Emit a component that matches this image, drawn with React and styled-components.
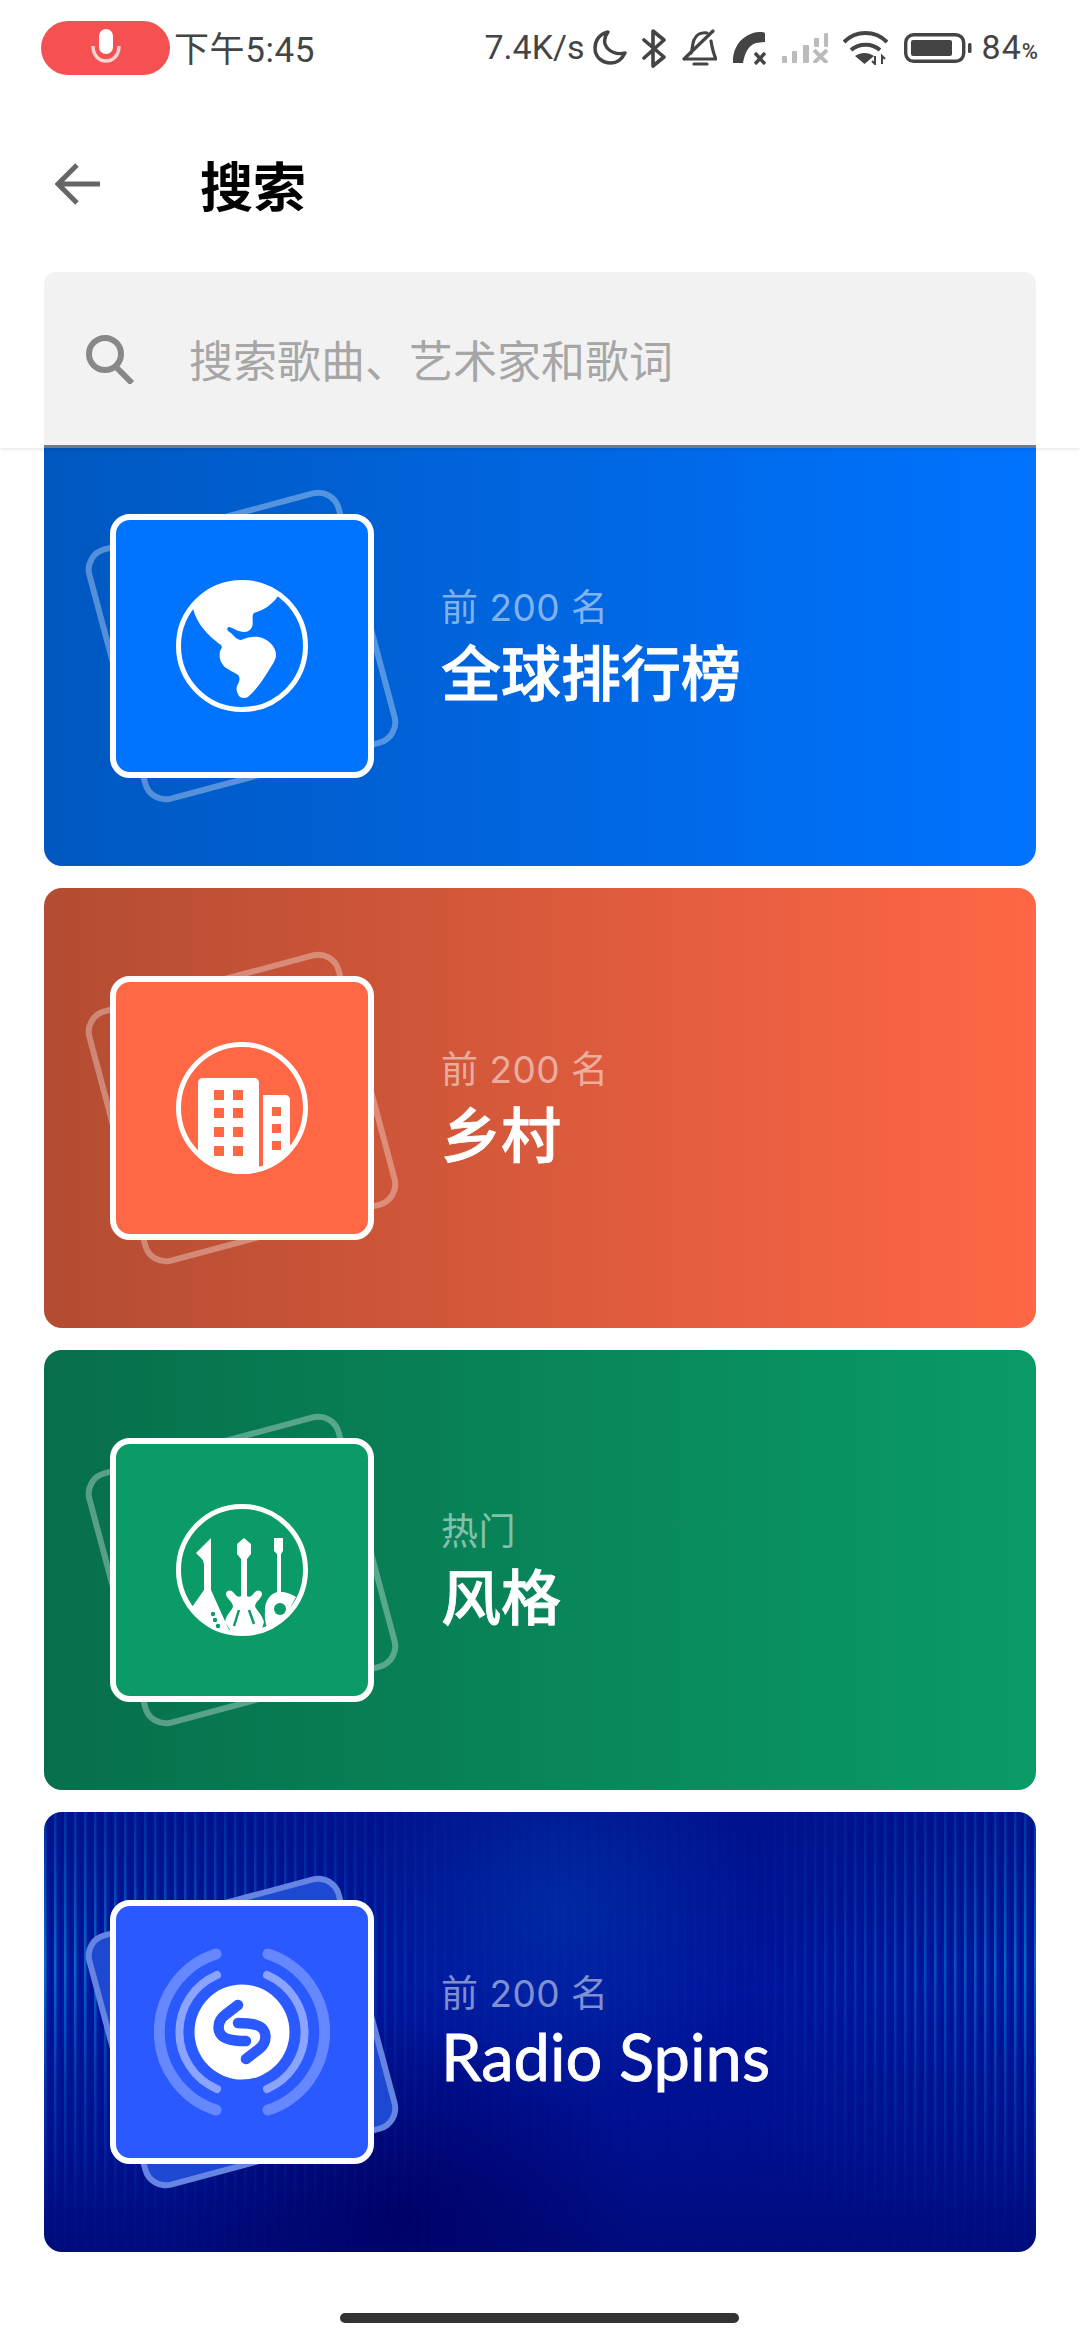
import React from 'react'
import styled, { createGlobalStyle } from 'styled-components'

const GlobalStyle = createGlobalStyle`
  html, body { margin: 0; padding: 0; background: #fff; }
  body { font-family: "Noto Sans CJK SC", "Noto Sans", sans-serif; }
`

function App() {
  return (
    <Page>
      <GlobalStyle />
      <Header>
        <StatusBar>
          <MicPill>
            <svg width="30" height="38" viewBox="0 0 30 38">
              <rect x="8" y="0" width="14" height="25" rx="7" fill="#fff" />
              <path d="M2 17 C2 37 28 37 28 17" fill="none" stroke="#fff" strokeOpacity=".75" strokeWidth="3.4" />
            </svg>
          </MicPill>
          <Time>下午5:45</Time>
          <Spacer />
          <Speed>7.4K/s</Speed>
          <StatusIcons />
          <Percent>84<small>%</small></Percent>
        </StatusBar>
        <TitleRow>
          <BackButton>
            <svg width="46" height="44" viewBox="0 0 46 44" fill="none" stroke="#666" strokeWidth="5">
              <path d="M45 22H4M22 3 3 22l19 19" />
            </svg>
          </BackButton>
          <Title>搜索</Title>
        </TitleRow>
        <SearchBox>
          <svg width="50" height="50" viewBox="0 0 50 50" fill="none" stroke="#888" strokeWidth="6">
            <circle cx="20" cy="20" r="16" />
            <path d="M30 32 47 49" />
          </svg>
          <Placeholder>搜索歌曲、艺术家和歌词</Placeholder>
        </SearchBox>
      </Header>
      <ChartList>
        <ChartCard $from="#0058c0" $to="#0073ff">
          <Cover>
            <BackPlate />
            <FrontPlate $fill="#0073ff">
              <GlobeIcon />
            </FrontPlate>
          </Cover>
          <CardText>
            <Eyebrow>前 200 名</Eyebrow>
            <CardTitle>全球排行榜</CardTitle>
          </CardText>
        </ChartCard>
        <ChartCard $from="#b34c32" $to="#ff6745">
          <Cover>
            <BackPlate />
            <FrontPlate $fill="#ff6745">
              <CityIcon />
            </FrontPlate>
          </Cover>
          <CardText>
            <Eyebrow>前 200 名</Eyebrow>
            <CardTitle>乡村</CardTitle>
          </CardText>
        </ChartCard>
        <ChartCard $from="#076f4b" $to="#0a9b67">
          <Cover>
            <BackPlate />
            <FrontPlate $fill="#0b9b67">
              <GuitarIcon />
            </FrontPlate>
          </Cover>
          <CardText>
            <Eyebrow>热门</Eyebrow>
            <CardTitle>风格</CardTitle>
          </CardText>
        </ChartCard>
        <RadioCard>
          <Cover>
            <BackPlate $fill="#1c48d2" />
            <FrontPlate $fill="#2a59ff">
              <ShazamIcon />
            </FrontPlate>
          </Cover>
          <CardText>
            <Eyebrow>前 200 名</Eyebrow>
            <CardTitle $latin>Radio Spins</CardTitle>
          </CardText>
        </RadioCard>
      </ChartList>
      <HomeBar />
    </Page>
  )
}

function StatusIcons() {
  return (
    <IconRow>
      <svg width="34" height="36" viewBox="0 0 34 36" fill="none" stroke="#444" strokeWidth="3.4" strokeLinejoin="round">
        <path d="M15 2C6 4 2 11 2 18c0 9 7 15 16 15 6 0 11-4 14-10-8 2-17-1-20-9-1-4 0-8 3-12Z" />
      </svg>
      <svg width="24" height="39" viewBox="0 0 24 39" fill="none" stroke="#444" strokeWidth="3.6" strokeLinecap="round" strokeLinejoin="round">
        <path d="M2 11 22 28 11 37V2l11 9L2 29" />
      </svg>
      <svg width="35" height="38" viewBox="0 0 35 38" fill="none" stroke="#444" strokeWidth="3.2" strokeLinecap="round">
        <path d="M9 24c2-4 1-9 3-13 2-5 7-8 13-7M29 12c1 6 2 12 5 18H4" />
        <path d="M31 2 2 30" />
        <path d="M12 35h13" />
      </svg>
      <svg width="34" height="33" viewBox="0 0 34 33">
        <path d="M33 2v8l-9 1c-7 2-11 9-13 20H1C0 14 12 1 27 0c3 0 6 0 6 2Z" fill="#444" />
        <path d="M23 21 33 32M33 21 23 32" stroke="#444" strokeWidth="3.4" fill="none" />
      </svg>
      <svg width="46" height="30" viewBox="0 0 46 30" fill="#bbb">
        <rect x="0" y="23" width="5" height="7" rx="1" />
        <rect x="10" y="18" width="5" height="12" rx="1" />
        <rect x="21" y="12" width="6" height="18" rx="1" />
        <rect x="32" y="5" width="5" height="9" rx="1" />
        <rect x="42" y="0" width="4" height="14" rx="1" />
        <path d="M32 17 45 30M45 17 32 30" stroke="#bbb" strokeWidth="4" fill="none" />
      </svg>
      <svg width="45" height="34" viewBox="0 0 45 34" fill="none" stroke="#444" strokeWidth="4">
        <path d="M1 11C13-1 32-1 44 11M8 19c8-7 21-7 29 0" />
        <path d="M13 25c6-4 13-4 19 0l-9.500 8Z" fill="#444" stroke="none" transform="translate(-1 0)" />
        <path d="M32 25v8l-3-3M39 33v-8l3 3" strokeWidth="2" />
      </svg>
      <svg width="68" height="30" viewBox="0 0 68 30">
        <rect x="1.700" y="1.700" width="58" height="26.600" rx="8" fill="none" stroke="#444" strokeWidth="3.400" />
        <rect x="7" y="7" width="41" height="16" rx="2" fill="#444" />
        <rect x="64" y="10" width="3.500" height="10" rx="1.500" fill="#444" />
      </svg>
    </IconRow>
  )
}

function GlobeIcon() {
  return (
    <svg width="132" height="132" viewBox="0 0 132 132">
      <circle cx="66" cy="66" r="63.500" fill="none" stroke="#fff" strokeWidth="5" />
      <path d="M17 28C27 9 46 1 65 1c15 0 29 5 37 15-5 8-14 14-24 17-3 3 0 9-2 14-2 4-5 5-8 5-6 0-10-4-15-5-3 1-2 4 2 6 3 3 6 7 10 7 6-3 13-4 18-3 9 2 17 9 17 18 0 5-4 10-7 15-6 10-13 20-21 27-4 2-9 1-10-3-2-4-2-7 0-10 2-4 2-7 0-9-6-4-12-6-15-10-3-4-4-8-3-14 1-2 3-3 1-6C38 60 21 47 17 28Z" fill="#fff" />
    </svg>
  )
}

function CityIcon() {
  const win = (x, y, w, h, key) => <rect key={key} x={x} y={y} width={w} height={h} fill="#ff6745" />
  return (
    <svg width="132" height="132" viewBox="0 0 132 132">
      <defs>
        <clipPath id="cityClip"><circle cx="66" cy="66" r="66" /></clipPath>
      </defs>
      <circle cx="66" cy="66" r="63.500" fill="none" stroke="#fff" strokeWidth="5" />
      <g clipPath="url(#cityClip)">
        <path d="M22 132V41c0-3 2-5 5-5h51c3 0 5 2 5 5v91Z" fill="#fff" />
        <path d="M87 132V53h22c3 0 5 2 5 5v74Z" fill="#fff" />
      </g>
      {[48, 66, 85, 104].flatMap(y => [38, 57].map(x => win(x, y, 10, 10, `${x}-${y}`)))}
      {[65, 82, 99].map(y => win(96, y, 9, 9, `r-${y}`))}
    </svg>
  )
}

function GuitarIcon() {
  return (
    <svg width="132" height="132" viewBox="0 0 132 132">
      <defs>
        <clipPath id="guitarClip"><circle cx="66" cy="66" r="65" /></clipPath>
      </defs>
      <circle cx="66" cy="66" r="63.500" fill="none" stroke="#fff" strokeWidth="5" />
      <g clipPath="url(#guitarClip)" fill="#fff">
        <path d="M35 34 20 49l6 6c2 3 2 5 2 9v22L14 106l16 26h26l-3-6-18-40Z" />
        <path d="M68 34l-7 6v10l4 5v37c-2 2-5 0-7-3-3-4-8-3-8 1s6 7 7 12c0 4-7 8-8 16l9 14h26l4-14c-2-8-8-12-9-16 1-5 7-8 7-12s-5-5-8-1c-2 3-5 5-7 3V55l4-5V40Z" />
        <path d="M98 34h9v13l-2 3v38c5 0 11 2 15 5l-20 37-9 2c1-10-3-14-2-24-1-10 5-18 12-20V50l-3-3Z" />
      </g>
      <g fill="#0b9b67">
        <circle cx="104" cy="105" r="6" />
        <circle cx="37" cy="110" r="2.200" />
        <circle cx="39" cy="116" r="2.200" />
        <circle cx="42" cy="122" r="2.200" />
        <path d="M63 106 58 122M73 106l5 14" stroke="#0b9b67" strokeWidth="2.500" fill="none" />
      </g>
    </svg>
  )
}

function ShazamIcon() {
  return (
    <svg width="176" height="176" viewBox="0 0 176 176" fill="none" strokeLinecap="round">
      <path d="M62 10A82 82 0 0 0 62 166M114 10A82 82 0 0 1 114 166" stroke="#fff" strokeOpacity=".28" strokeWidth="11" />
      <path d="M63 31A62 62 0 0 0 63 145M113 31A62 62 0 0 1 113 145" stroke="#fff" strokeOpacity=".45" strokeWidth="8" />
      <circle cx="88" cy="88" r="47.500" fill="#fff" />
      <path d="M84 61 71 71c-9 7-9 21 3 24 6 2 12 2 18 2M92 115l13-10c9-7 9-21-3-24-6-2-12-2-18-2" stroke="#2a59ff" strokeWidth="10.500" />
    </svg>
  )
}

export default App

const Page = styled.div`
  width: 1080px;
  height: 2340px;
  position: relative;
  overflow: hidden;
  background: #fff;
`

const Header = styled.header`
  position: relative;
  z-index: 2;
  height: 448px;
  background: #fff;
  box-shadow: 0 1px 4px rgba(0, 0, 0, .12);
  display: flex;
  flex-direction: column;
`

const StatusBar = styled.div`
  display: flex;
  align-items: center;
  height: 96px;
  padding: 0 42px 0 41px;
  color: #444;
  font-family: "Roboto", "Noto Sans CJK SC", sans-serif;
`

const MicPill = styled.div`
  width: 129px;
  height: 54px;
  border-radius: 27px;
  background: #f55153;
  display: flex;
  align-items: center;
  justify-content: center;
`

const Time = styled.span`
  margin: -3px 0 0 4px;
  font-size: 35px;
  letter-spacing: .6px;
`

const Spacer = styled.div`
  flex: 1;
`

const Speed = styled.span`
  margin-top: -2px;
  font-size: 34px;
  margin-right: 8px;
`

const IconRow = styled.div`
  display: flex;
  align-items: center;
  gap: 15.5px;
`

const Percent = styled.span`
  margin: -2px 0 0 10px;
  font-size: 34px;
  letter-spacing: 1px;
  small { font-size: 22px; font-weight: 500; letter-spacing: 0; }
`

const TitleRow = styled.div`
  display: flex;
  align-items: center;
  height: 176px;
  padding-left: 55px;
`

const BackButton = styled.div`
  width: 145px;
  display: flex;
`

const Title = styled.h1`
  margin: 0;
  font-size: 53px;
  font-weight: 700;
  color: #000;
  line-height: 1;
`

const SearchBox = styled.div`
  margin: 0 44px;
  height: 173px;
  flex: none;
  box-sizing: content-box;
  background: #f2f2f2;
  border-radius: 12px 12px 0 0;
  border-bottom: 3px solid #6b7b8c;
  display: flex;
  align-items: center;
  padding-left: 41px;
`

const Placeholder = styled.span`
  margin-left: 54px;
  font-size: 44px;
  color: #a6a6a6;
  line-height: 1;
`

const ChartList = styled.main`
  margin-top: -22px;
  padding: 0 44px;
  display: flex;
  flex-direction: column;
  gap: 22px;
`

const ChartCard = styled.section`
  height: 440px;
  border-radius: 18px;
  overflow: hidden;
  display: flex;
  align-items: center;
  padding-left: 66px;
  background: linear-gradient(90deg, ${p => p.$from}, ${p => p.$to});
`

const RadioCard = styled(ChartCard)`
  position: relative;
  background:
    radial-gradient(ellipse 240px 200px at 36% 92%, rgba(0, 0, 100, .85), rgba(0, 0, 100, 0)),
    radial-gradient(ellipse 200px 200px at 52% 22%, rgba(5, 80, 190, .35), rgba(0, 40, 170, 0)),
    linear-gradient(180deg, #00128c 0%, #00149c 40%, #00108f 75%, #000c7c 100%);
  &::before {
    content: "";
    position: absolute;
    inset: 0;
    background: repeating-linear-gradient(90deg, rgba(15, 140, 220, .7) 0 2px, rgba(0, 60, 180, .25) 3px 5px, rgba(0, 20, 140, 0) 6px 10px);
    mask-image:
      linear-gradient(90deg, #000 0%, rgba(0, 0, 0, .7) 20%, rgba(0, 0, 0, .06) 42%, rgba(0, 0, 0, .06) 72%, #000 100%),
      linear-gradient(180deg, rgba(0, 0, 0, .35) 0%, #000 35%, rgba(0, 0, 0, .45) 62%, rgba(0, 0, 0, .04) 92%);
    mask-composite: intersect;
  }
  > * { position: relative; }
`

const Cover = styled.div`
  position: relative;
  width: 264px;
  height: 264px;
  flex: none;
`

const BackPlate = styled.div`
  position: absolute;
  inset: 0;
  box-sizing: border-box;
  border: 6px solid rgba(255, 255, 255, .33);
  border-radius: 24px;
  background: ${p => p.$fill || 'transparent'};
  transform: rotate(-15deg);
`

const FrontPlate = styled.div`
  position: absolute;
  inset: 0;
  box-sizing: border-box;
  border: 6px solid #fff;
  border-radius: 20px;
  background: ${p => p.$fill};
  display: flex;
  align-items: center;
  justify-content: center;
`

const CardText = styled.div`
  margin-left: 67px;
  display: flex;
  flex-direction: column;
  color: #fff;
`

const Eyebrow = styled.div`
  font-family: "Inter", "Noto Sans CJK SC", sans-serif;
  font-size: 37px;
  line-height: 44px;
  letter-spacing: .5px;
  color: rgba(255, 255, 255, .52);
`

const CardTitle = styled.div`
  font-family: ${p => (p.$latin ? '"Lato", "Noto Sans", sans-serif' : '"Noto Sans CJK SC", sans-serif')};
  font-size: ${p => (p.$latin ? '65px' : '60px')};
  font-weight: ${p => (p.$latin ? 400 : 500)};
  -webkit-text-stroke: .8px #fff;
  line-height: 72px;
  margin-top: 4px;
`

const HomeBar = styled.div`
  position: absolute;
  left: 340px;
  bottom: 17px;
  width: 399px;
  height: 10px;
  border-radius: 5px;
  background: #333;
`
